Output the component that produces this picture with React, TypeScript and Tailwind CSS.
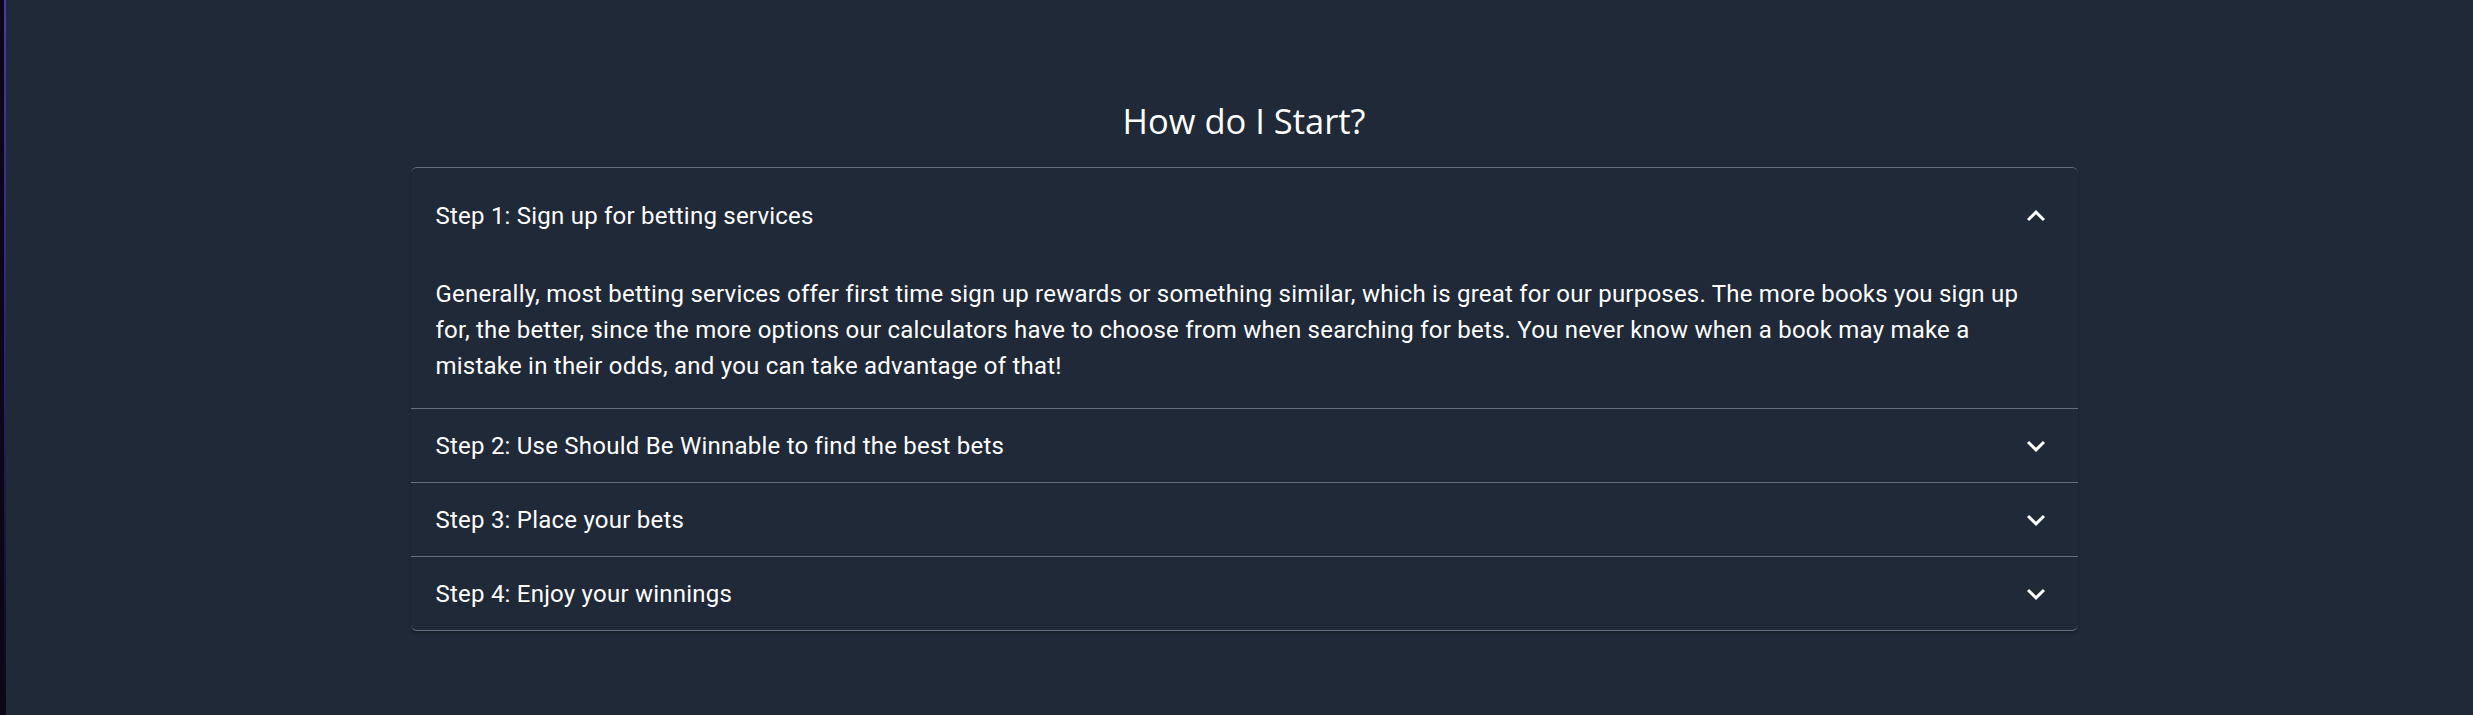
import { useState } from 'react';

const steps = [
  {
    title: 'Step 1: Sign up for betting services',
    body: 'Generally, most betting services offer first time sign up rewards or something similar, which is great for our purposes. The more books you sign up for, the better, since the more options our calculators have to choose from when searching for bets. You never know when a book may make a mistake in their odds, and you can take advantage of that!',
  },
  {
    title: 'Step 2: Use Should Be Winnable to find the best bets',
    body: 'Our calculators scan the books you use and point you to the bets with the best value.',
  },
  {
    title: 'Step 3: Place your bets',
    body: 'Head over to your books and place the bets that were found for you.',
  },
  {
    title: 'Step 4: Enjoy your winnings',
    body: 'Sit back and collect.',
  },
];

function Chevron({ open }: { open: boolean }) {
  return (
    <svg
      viewBox="0 0 24 24"
      width={36}
      height={36}
      className={open ? 'rotate-180' : ''}
      fill="#ffffff"
    >
      <path d="M16.59 8.59 12 13.17 7.41 8.59 6 10l6 6 6-6z" />
    </svg>
  );
}

export default function App() {
  const [open, setOpen] = useState<number | null>(0);

  return (
    <div className="flex min-h-screen bg-[#1f2937] font-['Roboto',sans-serif] text-white">
      {/* left edge strip */}
      <div className="flex w-[6px] shrink-0">
        <div className="w-[4px] bg-[#0a0716]" />
        <div className="w-[2px] bg-gradient-to-b from-[#4b36b8] via-[#2e2270] to-[#0a0716]" />
      </div>

      <main className="flex-1 pl-[9px] pt-[97px]">
        <h2 className="text-center font-['Open_Sans',sans-serif] text-[34.5px] leading-[48px] font-normal mb-[22px]">
          How do I Start?
        </h2>

        <div className="mx-auto w-[1667px] rounded-[6px] border-t border-b border-[#666f7d] bg-[#1f2937] shadow-[0_2px_3px_rgba(0,0,0,0.25)]">
          {steps.map((step, i) => {
            const isOpen = open === i;
            return (
              <div key={step.title} className={i > 0 ? 'border-t border-[#666f7d]' : ''}>
                <button
                  onClick={() => setOpen(isOpen ? null : i)}
                  className={`flex w-full items-center justify-between pl-[25px] pr-[24px] text-left ${isOpen ? 'h-[96px]' : 'h-[73px]'}`}
                >
                  <span className="text-[24px] leading-[36px] tracking-[0.00938em]">{step.title}</span>
                  <Chevron open={isOpen} />
                </button>
                {isOpen && (
                  <div className="pl-[25px] pr-[24px] pt-[12px] pb-[24px] text-[24px] leading-[36px] tracking-[0.00938em]">
                    {step.body}
                  </div>
                )}
              </div>
            );
          })}
        </div>
      </main>
    </div>
  );
}
